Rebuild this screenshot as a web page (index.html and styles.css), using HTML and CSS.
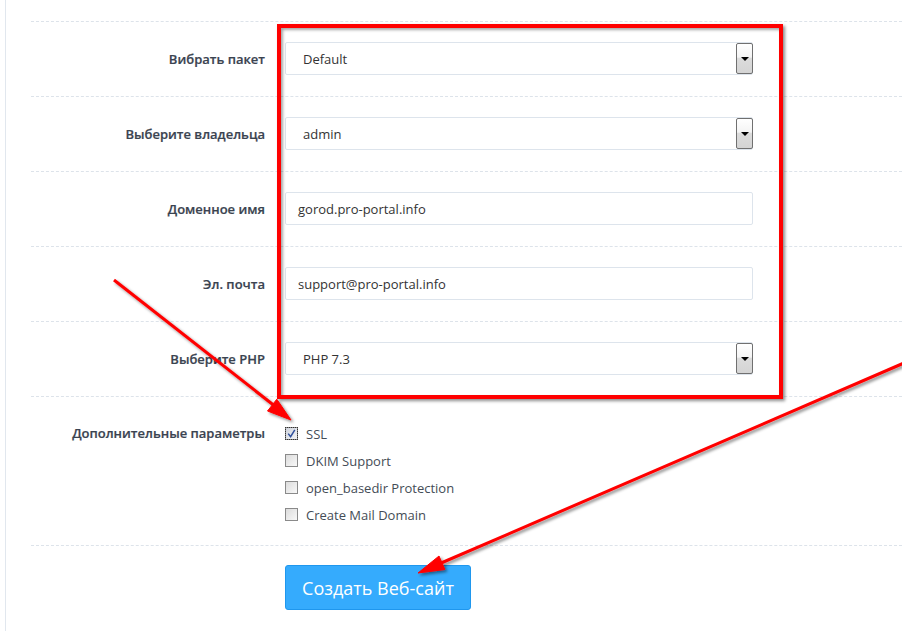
FILE: index.html
```html
<!DOCTYPE html>
<html lang="ru">
<head>
<meta charset="utf-8">
<title>Создать Веб-сайт</title>
<link rel="stylesheet" href="styles.css">
</head>
<body>
<div class="panel">
  <form class="form">
    <div class="row">
      <div class="label">Вибрать пакет</div>
      <div class="select"><span class="value">Default</span><span class="arrow"></span></div>
    </div>
    <div class="row">
      <div class="label">Выберите владельца</div>
      <div class="select"><span class="value">admin</span><span class="arrow"></span></div>
    </div>
    <div class="row">
      <div class="label">Доменное имя</div>
      <div class="input">gorod.pro-portal.info</div>
    </div>
    <div class="row">
      <div class="label">Эл. почта</div>
      <div class="input">support@pro-portal.info</div>
    </div>
    <div class="row">
      <div class="label">Выберите PHP</div>
      <div class="select"><span class="value">PHP 7.3</span><span class="arrow"></span></div>
    </div>
    <div class="row row-checks">
      <div class="label label-top">Дополнительные параметры</div>
      <div class="checks">
        <div class="check"><span class="box checked"><svg viewBox="0 0 9 9" width="9" height="9"><path d="M1.2 4.6 L3.6 7.6 L7.8 0.8" fill="none" stroke="#2f4f9c" stroke-width="1.5"/></svg></span>SSL</div>
        <div class="check"><span class="box"></span>DKIM Support</div>
        <div class="check"><span class="box"></span>open_basedir Protection</div>
        <div class="check"><span class="box"></span>Create Mail Domain</div>
      </div>
    </div>
    <div class="row row-button">
      <div class="label"></div>
      <button type="button" class="btn">Создать Веб-сайт</button>
    </div>
  </form>
</div>

<div class="highlight"></div>

<svg class="arrows" width="902" height="631" viewBox="0 0 902 631">
  <defs>
    <filter id="sh" x="-10%" y="-10%" width="120%" height="120%">
      <feDropShadow dx="2" dy="2" stdDeviation="1.5" flood-color="#000" flood-opacity="0.45"/>
    </filter>
  </defs>
  <g filter="url(#sh)" fill="#ff0000" stroke="#ff0000">
    <line x1="114" y1="280" x2="276" y2="407" stroke-width="3"/>
    <polygon points="291,420 267.5,411 276.8,399.2" stroke-width="1"/>
    <line x1="904" y1="363" x2="440" y2="563.5" stroke-width="3"/>
    <polygon points="418,573 444.9,569.5 439,556" stroke-width="1"/>
  </g>
</svg>
</body>
</html>
```

FILE: styles.css
```css
html, body {
  margin: 0;
  padding: 0;
  background: #ffffff;
}

body {
  width: 902px;
  height: 631px;
  overflow: hidden;
  position: relative;
  font-family: "Open Sans", "Noto Sans", "Liberation Sans", sans-serif;
  font-size: 13px;
  color: #333333;
}

.panel {
  margin-left: 5px;
  border-left: 1px solid #e1e7ee;
  min-height: 631px;
}

.form {
  padding: 21px 0 0 25px;
}

.row {
  display: flex;
  align-items: center;
  border-top: 1px dashed #dde3ea;
  padding: 20px 0 21px;
}

.label {
  width: 234px;
  margin-right: 20px;
  flex: none;
  text-align: right;
  font-weight: 600;
  color: #3a4350;
  -webkit-text-stroke: 0.2px #3a4350;
}

.select,
.input {
  box-sizing: border-box;
  width: 468px;
  height: 33px;
  border: 1px solid #dde4ec;
  border-radius: 2px;
  background: #fff;
  display: flex;
  align-items: center;
  color: #333;
}

.input {
  padding: 0 12px;
}

.select {
  padding: 0 0 0 17px;
  position: relative;
}

.select .value {
  flex: 1;
}

.arrow {
  box-sizing: border-box;
  width: 17px;
  height: 31px;
  border: 1px solid #707070;
  border-radius: 2px;
  background: linear-gradient(#ffffff 0%, #f4f4f4 45%, #dcdcdc 50%, #d4d4d4 100%);
  position: relative;
  flex: none;
  margin-right: -1px;
}

.arrow::after {
  content: "";
  position: absolute;
  left: 4px;
  top: 13px;
  border-left: 4px solid transparent;
  border-right: 4px solid transparent;
  border-top: 4px solid #000;
}

.row-checks {
  align-items: flex-start;
  padding: 23px 0 17px;
}

.label-top {
  line-height: 27px;
}

.checks {
  display: flex;
  flex-direction: column;
}

.check {
  display: flex;
  align-items: center;
  height: 27px;
  color: #444c56;
}

.box {
  box-sizing: border-box;
  width: 13px;
  height: 13px;
  border: 1px solid #8a8a8a;
  background: linear-gradient(135deg, #dcdcdc, #f8f8f8);
  margin-right: 8px;
  display: flex;
  align-items: center;
  justify-content: center;
  flex: none;
}

.box.checked {
  outline: 1px dotted #333;
  outline-offset: -1px;
  background: linear-gradient(135deg, #cfd3dc, #f2f3f6);
}

.row-button {
  padding: 19px 0 0;
  align-items: flex-start;
}

.btn {
  box-sizing: border-box;
  width: 186px;
  height: 45px;
  border: 1px solid #1f97ee;
  border-radius: 3px;
  background: #35abfd;
  color: #ffffff;
  font-family: "Open Sans", "Noto Sans", "Liberation Sans", sans-serif;
  font-size: 18px;
  padding: 0;
}

.highlight {
  position: absolute;
  left: 277px;
  top: 24px;
  width: 506px;
  height: 375px;
  box-sizing: border-box;
  border: 4px solid #ff0000;
  box-shadow: 2px 2px 3px rgba(0, 0, 0, 0.45), inset 2px 2px 3px rgba(0, 0, 0, 0.35);
  pointer-events: none;
}

.arrows {
  position: absolute;
  left: 0;
  top: 0;
  pointer-events: none;
}
```
